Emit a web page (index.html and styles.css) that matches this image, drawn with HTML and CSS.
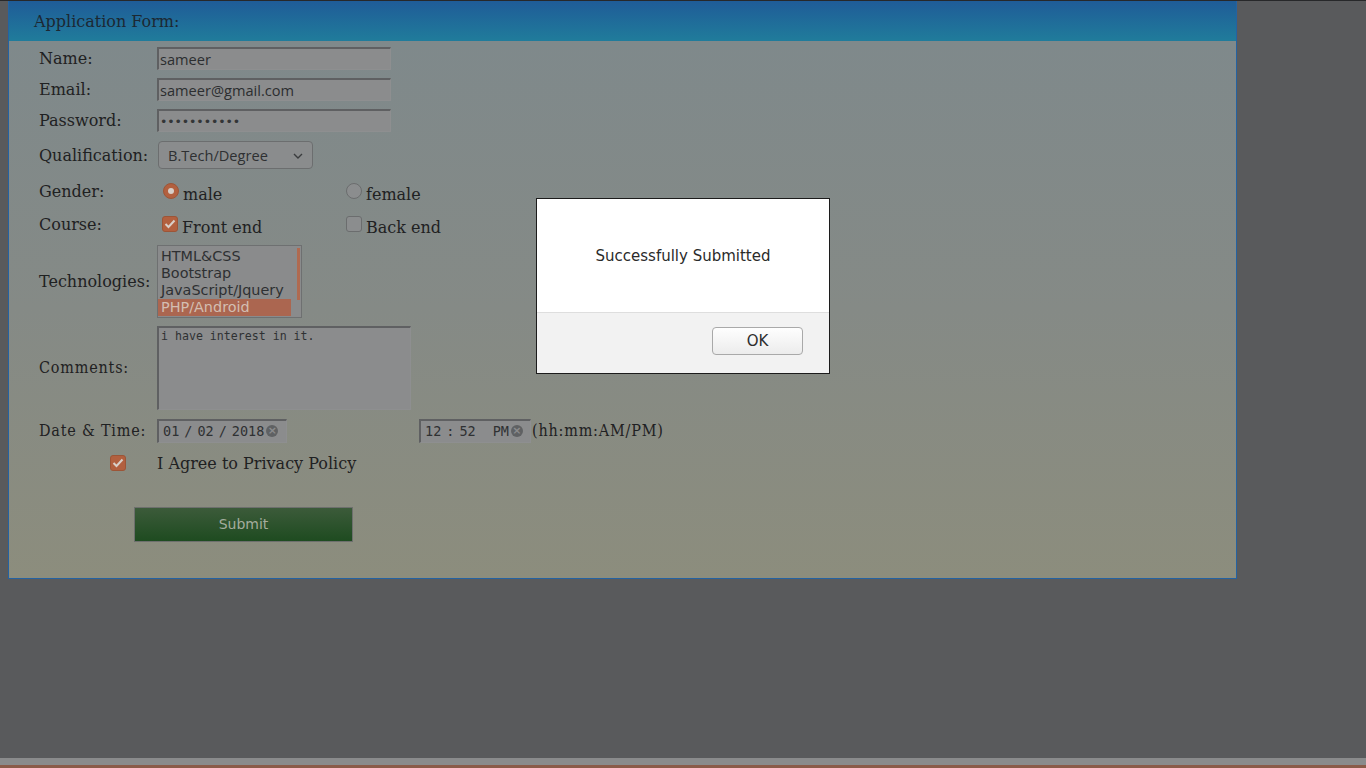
FILE: index.html
```html
<!DOCTYPE html>
<html lang="en">
<head>
<meta charset="utf-8">
<title>Application Form</title>
<link rel="stylesheet" href="styles.css">
</head>
<body>
<div class="panel">
  <div class="header">Application Form:</div>
  <form class="body">
    <div class="row r-name">
      <span class="label">Name:</span>
      <input class="txt" type="text" value="sameer" readonly>
    </div>
    <div class="row r-email">
      <span class="label">Email:</span>
      <input class="txt" type="text" value="sameer@gmail.com" readonly>
    </div>
    <div class="row r-pass">
      <span class="label">Password:</span>
      <div class="txt pass">•••••••••••</div>
    </div>
    <div class="row r-qual">
      <span class="label">Qualification:</span>
      <div class="select">
        <span>B.Tech/Degree</span>
        <svg class="chev" width="10" height="6" viewBox="0 0 10 6"><path d="M1 1 L5 5 L9 1" fill="none" stroke="#3a3c3e" stroke-width="1.4"/></svg>
      </div>
    </div>
    <div class="row r-gender">
      <span class="label">Gender:</span>
      <div class="opt opt-first"><span class="radio on"></span><span class="otext">male</span></div>
      <div class="opt"><span class="radio"></span><span class="otext">female</span></div>
    </div>
    <div class="row r-course">
      <span class="label">Course:</span>
      <div class="opt opt-first cb-first"><span class="check on"><svg width="12" height="10" viewBox="0 0 12 10"><path d="M1.5 5 L4.5 8 L10.5 1.5" fill="none" stroke="#d9cfc8" stroke-width="2"/></svg></span><span class="otext">Front end</span></div>
      <div class="opt"><span class="check"></span><span class="otext">Back end</span></div>
    </div>
    <div class="row r-tech">
      <span class="label">Technologies:</span>
      <div class="list">
        <div class="options">
          <div class="option">HTML&amp;CSS</div>
          <div class="option">Bootstrap</div>
          <div class="option">JavaScript/Jquery</div>
          <div class="option sel">PHP/Android</div>
        </div>
        <div class="scroll"><div class="thumb"></div></div>
      </div>
    </div>
    <div class="row r-comm">
      <span class="label cond">Comments:</span>
      <div class="area">i have interest in it.</div>
    </div>
    <div class="row r-date">
      <span class="label cond">Date &amp; Time:</span>
      <div class="dt date"><span class="dtv">01<i>/</i>02<i>/</i>2018</span><span class="clear">×</span></div>
      <div class="dt time"><span class="dtv">12<i>:</i>52<b>PM</b></span><span class="clear">×</span></div>
      <span class="hint cond">(hh:mm:AM/PM)</span>
    </div>
    <div class="row r-agree">
      <span class="check on agree-cb"><svg width="12" height="10" viewBox="0 0 12 10"><path d="M1.5 5 L4.5 8 L10.5 1.5" fill="none" stroke="#d9cfc8" stroke-width="2"/></svg></span>
      <span class="agree-text">I Agree to Privacy Policy</span>
    </div>
    <div class="row r-submit">
      <button class="submit" type="button">Submit</button>
    </div>
  </form>
</div>
<div class="footer"><div class="strip-gray"></div><div class="strip-brown"></div></div>

<div class="dialog">
  <div class="dlg-msg">Successfully Submitted</div>
  <div class="dlg-foot"><button class="ok" type="button">OK</button></div>
</div>
</body>
</html>
```
FILE: styles.css
```css
html, body { margin: 0; padding: 0; }
body {
  height: 100vh;
  box-sizing: border-box;
  border-top: 1px solid #27282a;
  background: #595a5c;
  display: flex;
  flex-direction: column;
  font-family: "DejaVu Serif", serif;
  font-size: 16px;
  color: #1f2122;
}
.panel {
  margin-left: 8px;
  width: 1229px;
  box-sizing: border-box;
  border: 1px solid #2462a2;
  border-top: none;
  flex: none;
}
.header {
  height: 40px;
  box-sizing: border-box;
  padding: 1px 0 0 25px;
  display: flex;
  align-items: center;
  background: linear-gradient(#1f5c98, #207c9b);
  color: #1c2833;
  font-size: 16px;
}
.body {
  display: block;
  margin: 0;
  padding: 2px 0 8px 30px;
  background: linear-gradient(#7f898b, #858a86 50%, #8c8d7d);
}
.row { display: flex; align-items: center; }
.label { width: 118px; flex: none; }
.cond { font-stretch: condensed; font-family: "DejaVu Serif Condensed", "DejaVu Serif", serif; letter-spacing: 0.8px; }

.r-name, .r-email, .r-pass { height: 31px; }
.r-qual { height: 38px; }
.r-gender { height: 34px; }
.r-course { height: 32px; }
.r-tech { height: 82px; }
.r-comm { height: 91px; }
.r-date { height: 35px; }
.r-agree { height: 30px; }
.r-submit { height: 92px; }

.txt {
  width: 234px;
  height: 23px;
  box-sizing: border-box;
  margin: 0;
  padding: 0 0 0 1px;
  border-style: solid;
  border-width: 2px 1px 1px 2px;
  border-color: #5f6062 #8e8f90 #8e8f90 #5f6062;
  background: #8b8c8d;
  color: #2c2e30;
  font-family: "Open Sans", "DejaVu Sans", sans-serif;
  font-size: 14.6px;
  outline: none;
}
.pass {
  display: flex;
  align-items: center;
  padding-left: 1px;
  font-family: "DejaVu Sans", sans-serif;
  font-size: 12.5px;
  letter-spacing: -0.1px;
  color: #333537;
}

.select {
  margin-left: 1px;
  width: 155px;
  height: 28px;
  box-sizing: border-box;
  border: 1px solid #6c6e6f;
  border-radius: 4px;
  background: #8a8c8d;
  display: flex;
  align-items: center;
  justify-content: space-between;
  padding: 0 9px 0 9px;
  font-family: "Open Sans", "DejaVu Sans", sans-serif;
  font-size: 14.6px;
  color: #2e3032;
}
.chev { margin-top: 1px; }

.opt { display: flex; align-items: center; }
.opt-first { margin-left: 6px; width: 183px; }
.cb-first { margin-left: 5px; width: 184px; }
.otext { margin-left: 4px; position: relative; top: 3px; }

.radio {
  width: 16px; height: 16px;
  box-sizing: border-box;
  border-radius: 50%;
  border: 1px solid #6b6d6e;
  background: #8b8d8e;
  flex: none;
  display: flex; align-items: center; justify-content: center;
}
.radio.on { background: #b2603f; border-color: #9c5537; }
.radio.on::after {
  content: "";
  width: 6px; height: 6px;
  border-radius: 50%;
  background: #d6cec8;
}
.check {
  width: 16px; height: 16px;
  box-sizing: border-box;
  border-radius: 3px;
  border: 1px solid #6b6d6e;
  background: #8b8d8e;
  flex: none;
  display: flex; align-items: center; justify-content: center;
}
.check.on { background: #b2603f; border-color: #9c5537; }

.list {
  width: 145px;
  height: 73px;
  box-sizing: border-box;
  border: 1px solid #6e7071;
  background: #8a8b8c;
  display: flex;
  padding-top: 2px;
  font-family: "DejaVu Sans", sans-serif;
  font-size: 14.4px;
  color: #2e3032;
}
.options { width: 133px; flex: none; }
.option { height: 17px; line-height: 17px; padding-left: 3px; white-space: nowrap; overflow: hidden; }
.option.sel { background: #ab6650; color: #d3beb2; }
.scroll { flex: 1; display: flex; justify-content: flex-end; padding-right: 1px; }
.thumb { width: 3px; height: 52px; background: #b06a50; }

.area {
  width: 254px;
  height: 84px;
  box-sizing: border-box;
  border-style: solid;
  border-width: 2px 1px 1px 2px;
  border-color: #5f6062 #8e8f90 #8e8f90 #5f6062;
  background: #8b8c8d;
  padding: 1px 2px;
  font-family: "DejaVu Sans Mono", monospace;
  font-size: 11.6px;
  color: #2f3133;
}

.dt {
  height: 24px;
  box-sizing: border-box;
  border-style: solid;
  border-width: 2px 1px 1px 2px;
  border-color: #5f6062 #8e8f90 #8e8f90 #5f6062;
  background: #8b8c8d;
  display: flex;
  align-items: center;
  font-family: "DejaVu Sans Mono", monospace;
  font-size: 13.5px;
  color: #2f3133;
}
.dtv { white-space: nowrap; }
.dtv i { font-style: normal; margin: 0 5px; }
.dtv b { font-weight: normal; margin-left: 17px; }
.date { width: 130px; padding-left: 4px; }
.time { width: 112px; padding-left: 4px; margin-left: 132px; }
.clear {
  margin-left: 2px;
  width: 12px; height: 12px;
  flex: none;
  border-radius: 50%;
  background: #5f6163;
  color: #8b8c8d;
  font-family: "DejaVu Sans", sans-serif;
  font-size: 11px;
  line-height: 12px;
  text-align: center;
  font-weight: bold;
}
.hint { margin-left: 1px; }

.agree-cb { margin-left: 71px; }
.agree-text { margin-left: 31px; }

.submit {
  margin: 0 0 0 95px;
  width: 219px;
  height: 35px;
  box-sizing: border-box;
  border: 1px solid #6d6f6d;
  background: linear-gradient(#3c5b3a, #1e4b20);
  color: #a4ac9d;
  font-family: "DejaVu Sans", sans-serif;
  font-size: 14px;
  padding: 0;
}

.footer { margin-top: auto; flex: none; }
.strip-gray { height: 7px; background: #8a8b8c; }
.strip-brown { height: 3px; background: #8b5b49; }

.dialog {
  position: fixed;
  left: 536px;
  top: 198px;
  width: 294px;
  height: 176px;
  box-sizing: border-box;
  border: 1px solid #1c1c1c;
  background: #ffffff;
  display: flex;
  flex-direction: column;
  font-family: "DejaVu Sans", sans-serif;
}
.dlg-msg {
  height: 114px;
  box-sizing: border-box;
  border-bottom: 1px solid #dedede;
  padding-top: 1px;
  display: flex;
  align-items: center;
  justify-content: center;
  font-size: 15px;
  color: #2a2a2a;
}
.dlg-foot {
  flex: 1;
  background: #f2f2f2;
  display: flex;
  align-items: flex-start;
  justify-content: flex-end;
  padding: 14px 26px 0 0;
}
.ok {
  width: 91px;
  height: 28px;
  box-sizing: border-box;
  border: 1px solid #a9a9a9;
  border-radius: 4px;
  background: linear-gradient(#fefefe, #ececec);
  font-family: "DejaVu Sans", sans-serif;
  font-size: 15px;
  color: #2e2e2e;
  padding: 0;
}
```
